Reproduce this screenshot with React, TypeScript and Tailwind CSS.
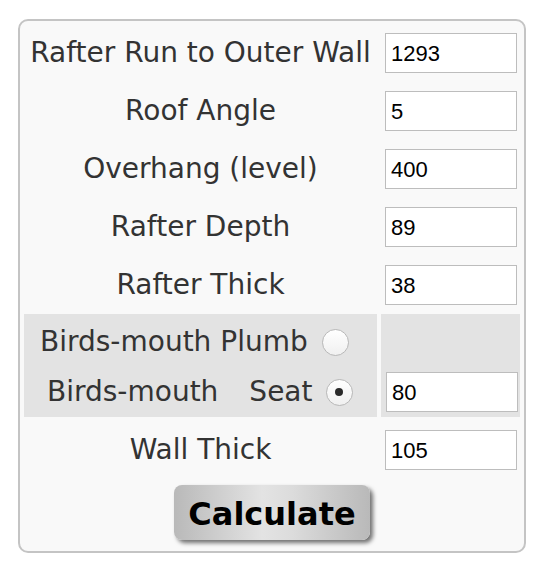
const rows = [
  { label: "Rafter Run to Outer Wall", value: "1293" },
  { label: "Roof Angle", value: "5" },
  { label: "Overhang (level)", value: "400" },
  { label: "Rafter Depth", value: "89" },
  { label: "Rafter Thick", value: "38" },
];

function Radio({ checked }: { checked?: boolean }) {
  return (
    <span className="w-[27px] h-[27px] rounded-full border border-[#b8b8b8] bg-gradient-to-b from-white to-[#f0f0f0] flex items-center justify-center shrink-0">
      {checked && <span className="w-[8px] h-[8px] rounded-full bg-[#2a2a2a]" />}
    </span>
  );
}

function Field({ value }: { value: string }) {
  return (
    <input
      defaultValue={value}
      className="w-[132px] h-[40px] border border-[#bdbdbd] bg-white px-[5px] pt-[2px] text-[22px] text-black outline-none font-['Liberation_Sans',Arial,sans-serif]"
    />
  );
}

function Row({ label, value }: { label: string; value: string }) {
  return (
    <div className="flex h-[58px] items-center gap-[4px]">
      <div className="w-[353px] text-center pt-[2px]">{label}</div>
      <div className="w-[139px] pl-[4px]">
        <Field value={value} />
      </div>
    </div>
  );
}

export default function App() {
  return (
    <div className="w-[548px] h-[578px] bg-white pt-[19px] pl-[18px] font-['DejaVu_Sans',Verdana,sans-serif] text-[28px] text-[#333]">
      <div className="w-[508px] h-[534px] border-2 border-[#c4c4c4] rounded-[10px] bg-[#f9f9f9] px-[4px] pt-[2px]">
        {rows.map((r) => (
          <Row key={r.label} label={r.label} value={r.value} />
        ))}

        <div className="flex h-[103px] mt-[1px] gap-[4px]">
          <div className="w-[353px] bg-[#e3e3e3] flex flex-col justify-center gap-[23px] pt-[3px]">
            <div className="flex items-center h-[27px] pl-[16px]">
              <span>Birds-mouth Plumb</span>
              <span className="ml-[14px]">
                <Radio />
              </span>
            </div>
            <div className="flex items-center h-[27px] pl-[23px]">
              <span>Birds-mouth</span>
              <span className="ml-[31px]">Seat</span>
              <span className="ml-[13px]">
                <Radio checked />
              </span>
            </div>
          </div>
          <div className="w-[139px] bg-[#e3e3e3] flex items-end pl-[5px] pb-[5px]">
            <Field value="80" />
          </div>
        </div>

        <div className="mt-[3px]">
          <Row label="Wall Thick" value="105" />
        </div>

        <div className="flex justify-center mt-[7px]">
          <button className="w-[196px] h-[55px] pt-[2px] rounded-[8px] bg-[linear-gradient(to_right,#b9b9b9,#e3e3e3_45%,#dcdcdc_60%,#b9b9b9)] shadow-[3px_3px_4px_rgba(0,0,0,0.55)] text-[32px] font-bold text-black">
            Calculate
          </button>
        </div>
      </div>
    </div>
  );
}
